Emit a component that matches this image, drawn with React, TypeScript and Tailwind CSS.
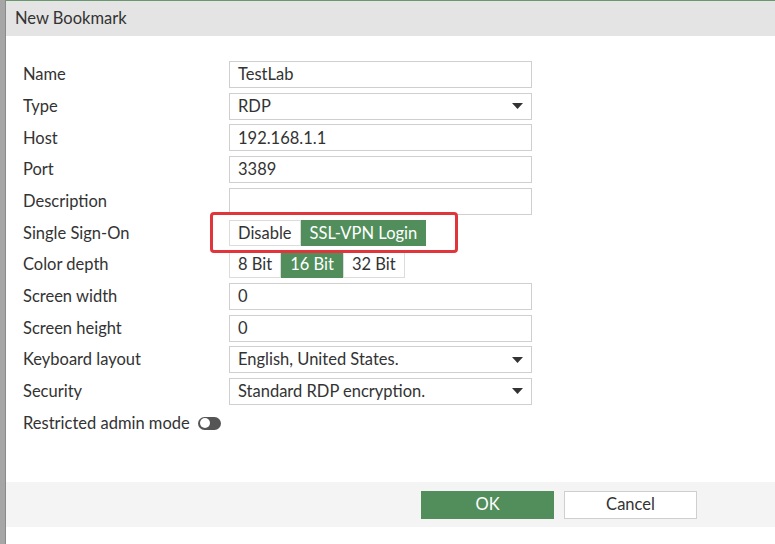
import type { ReactNode } from "react";

function Caret() {
  return (
    <svg width="11" height="6" viewBox="0 0 11 6" className="shrink-0">
      <path d="M0 0h11L5.5 6z" fill="#333" />
    </svg>
  );
}

function TextInput({ value }: { value: string }) {
  return (
    <div className="flex h-[27px] w-[303px] items-center border border-[#cfcfcf] bg-white pl-[8px] text-[16.5px] text-[#333]">
      {value}
    </div>
  );
}

function Select({ value }: { value: string }) {
  return (
    <div className="flex h-[27px] w-[303px] items-center justify-between border border-[#cfcfcf] bg-white pl-[8px] pr-[8px] text-[16.5px] text-[#333]">
      <span>{value}</span>
      <Caret />
    </div>
  );
}

function Toggle({ options, active }: { options: string[]; active: number }) {
  return (
    <div className="flex h-[26px]">
      {options.map((o, i) => (
        <div
          key={o}
          className={
            i === active
              ? "flex items-center bg-[#518e5b] px-[9px] text-[16.5px] text-white"
              : "flex items-center border border-[#dcdcdc] bg-white px-[8px] text-[16.5px] text-[#333]"
          }
        >
          {o}
        </div>
      ))}
    </div>
  );
}

function Row({ label, children }: { label: string; children?: ReactNode }) {
  return (
    <div className="flex h-[27px] items-center">
      <div className="w-[206px] text-[16.5px] text-[#333]">{label}</div>
      {children}
    </div>
  );
}

export default function App() {
  return (
    <div
      className="flex h-[544px] w-[775px] overflow-hidden bg-white"
      style={{ fontFamily: "Lato, 'Open Sans', sans-serif" }}
    >
      {/* page behind the dialog */}
      <div className="w-[6px] shrink-0 border-r border-[#8a8a8a] bg-[#a6a6a6]" />

      <div className="flex flex-1 flex-col">
        <div className="h-[1px] bg-[#6b976f]" />
        <div className="flex h-[35px] items-center bg-[#e4e4e4] pl-[9px] text-[16.5px] text-[#333]">
          New Bookmark
        </div>

        <div className="flex flex-col gap-[4.7px] pl-[17px] pt-[25px]">
          <Row label="Name">
            <TextInput value="TestLab" />
          </Row>
          <Row label="Type">
            <Select value="RDP" />
          </Row>
          <Row label="Host">
            <TextInput value="192.168.1.1" />
          </Row>
          <Row label="Port">
            <TextInput value="3389" />
          </Row>
          <Row label="Description">
            <TextInput value="" />
          </Row>
          <Row label="Single Sign-On">
            <div className="relative">
              <Toggle options={["Disable", "SSL-VPN Login"]} active={1} />
              <div className="absolute left-[-19px] top-[-8px] h-[41px] w-[248px] rounded-[4px] border-[3px] border-[#e0353b]" />
            </div>
          </Row>
          <Row label="Color depth">
            <Toggle options={["8 Bit", "16 Bit", "32 Bit"]} active={1} />
          </Row>
          <Row label="Screen width">
            <TextInput value="0" />
          </Row>
          <Row label="Screen height">
            <TextInput value="0" />
          </Row>
          <Row label="Keyboard layout">
            <Select value="English, United States." />
          </Row>
          <Row label="Security">
            <Select value="Standard RDP encryption." />
          </Row>
          <div className="flex h-[27px] items-center gap-[8px] text-[16.5px] text-[#333]">
            <span>Restricted admin mode</span>
            <div className="flex h-[13px] w-[23px] items-center rounded-full bg-[#555] pl-[2px]">
              <div className="h-[10px] w-[10px] rounded-full bg-white" />
            </div>
          </div>
        </div>

        <div className="mt-auto mb-[17px] flex h-[45px] items-center justify-end gap-[10px] bg-[#f4f4f4] pr-[78px]">
          <button className="h-[28px] w-[133px] bg-[#518e5b] text-[16.5px] text-white">OK</button>
          <button className="h-[28px] w-[133px] border border-[#cfcfcf] bg-white text-[16.5px] text-[#333]">
            Cancel
          </button>
        </div>
      </div>
    </div>
  );
}
